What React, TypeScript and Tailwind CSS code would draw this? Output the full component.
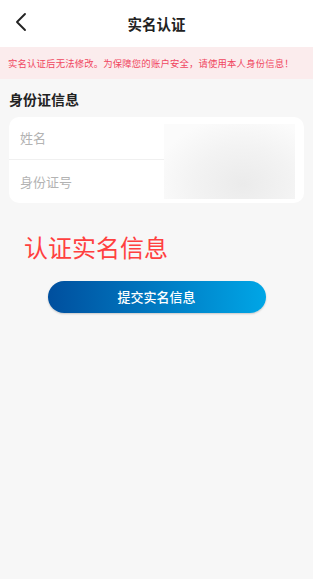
import { ChevronLeft } from 'lucide-react';

export default function App() {
  return (
    <div
      className="min-h-[579px] w-[313px] bg-[#f7f7f7] text-[#222]"
      style={{ fontFamily: '"Noto Sans CJK SC", "Noto Sans", sans-serif' }}
    >
      {/* header */}
      <div className="relative flex h-[47px] items-center justify-center bg-white">
        <button className="absolute left-[5px] top-[6px] text-[#222]">
          <ChevronLeft size={32} strokeWidth={1.4} />
        </button>
        <h1 className="text-[14.5px] font-bold">实名认证</h1>
      </div>

      {/* notice */}
      <div className="flex h-[32px] items-center bg-[#fbeced] px-[8px]">
        <p className="whitespace-nowrap text-[9.4px] tracking-[0.15px] text-[#f0465f]">
          实名认证后无法修改。为保障您的账户安全，请使用本人身份信息！
        </p>
      </div>

      <div className="px-[9px]">
        <h2 className="pt-[10px] pb-[8px] text-[14px] font-bold leading-[20px] text-[#222]">身份证信息</h2>

        <div className="relative rounded-[10px] bg-white">
          <div className="flex h-[43px] items-center border-b border-[#f0f0f0] pl-[11px] w-[155px]">
            <span className="text-[13px] text-[#b3b3b3]">姓名</span>
          </div>
          <div className="flex h-[43px] items-center pl-[11px]">
            <span className="text-[13px] text-[#b3b3b3]">身份证号</span>
          </div>
          <div className="absolute left-[155px] top-[7px] h-[75px] w-[131px] bg-[radial-gradient(ellipse_at_60%_80%,#ebebeb_0%,#f3f3f3_45%,#fbfbfb_80%)]" />
        </div>

        <p className="mt-[28px] pl-[15px] text-[24px] leading-[32px] text-[#ff4040]">认证实名信息</p>

        <div className="mt-[18px] flex justify-center">
          <button className="flex h-[32px] w-[218px] items-center justify-center rounded-full bg-gradient-to-r from-[#004f9e] to-[#00a6e6] text-[13px] font-medium text-white shadow-[0_1px_2px_rgba(0,0,0,0.2)]">
            提交实名信息
          </button>
        </div>
      </div>
    </div>
  );
}
